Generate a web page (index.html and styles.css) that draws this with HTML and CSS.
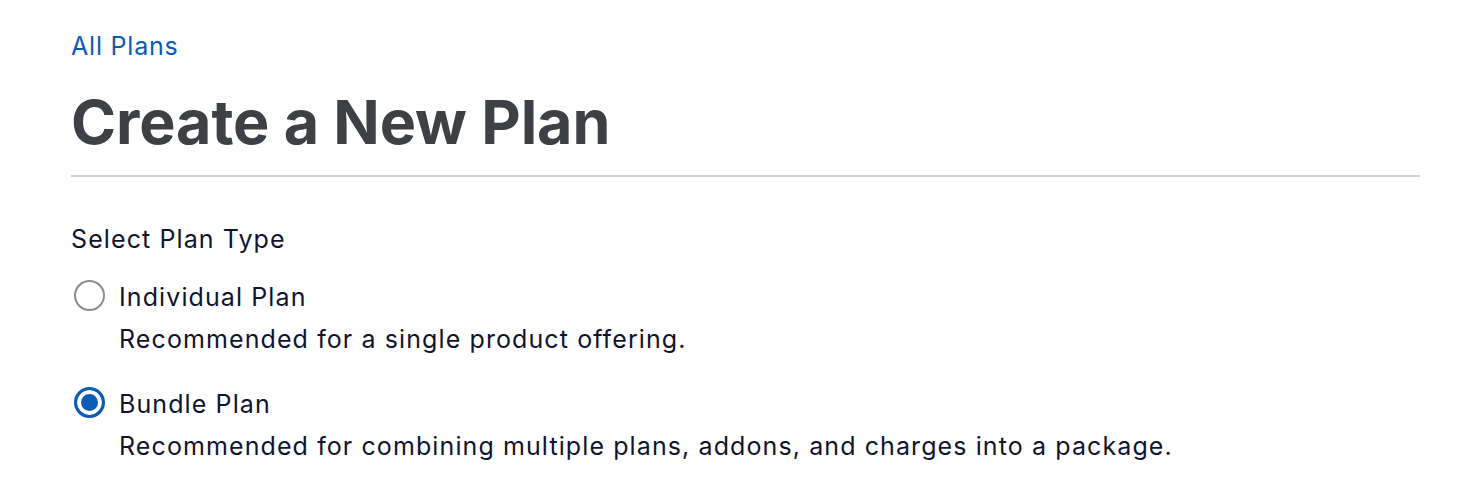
FILE: index.html
```html
<!DOCTYPE html>
<html lang="en">
<head>
  <meta charset="UTF-8" />
  <meta name="viewport" content="width=device-width, initial-scale=1.0" />
  <title>Create a New Plan</title>
  <link rel="stylesheet" href="styles.css">
</head>
<body>
  <div class="page">
    <a href="#" class="back-link">All Plans</a>
    <h1 class="title">Create a New Plan</h1>
    <hr class="divider" />

    <fieldset class="plan-type">
      <legend>Select Plan Type</legend>

      <label class="option">
        <input type="radio" name="planType" value="individual" />
        <span class="radio"></span>
        <span class="option-text">
          <span class="option-name">Individual Plan</span>
          <span class="option-desc">Recommended for a single product offering.</span>
        </span>
      </label>

      <label class="option">
        <input type="radio" name="planType" value="bundle" checked />
        <span class="radio"></span>
        <span class="option-text">
          <span class="option-name">Bundle Plan</span>
          <span class="option-desc">Recommended for combining multiple plans, addons, and charges into a package.</span>
        </span>
      </label>
    </fieldset>
  </div>
</body>
</html>
```

FILE: styles.css
```css
body {
  margin: 0;
  font-family: Inter, 'Noto Sans', sans-serif;
  color: #0f1430;
  background: #fff;
}

.page {
  padding: 29px 60px 0 71px;
}

.back-link {
  display: inline-block;
  color: #0b5cb5;
  font-size: 25px;
  line-height: 34px;
  letter-spacing: 0.8px;
  text-decoration: none;
}

.title {
  margin: 23px 0 0;
  font-size: 61px;
  line-height: 72px;
  font-weight: 700;
  color: #3d4045;
  letter-spacing: -0.1px;
}

.divider {
  margin: 17px 0 0;
  border: none;
  height: 2px;
  background: #d3d3d3;
}

.plan-type {
  border: none;
  margin: 45px 0 0;
  padding: 0;
}

.plan-type legend {
  padding: 0;
  font-size: 25px;
  line-height: 34px;
  letter-spacing: 1.1px;
}

.option {
  display: flex;
  align-items: flex-start;
  gap: 14px;
  margin-top: 24px;
  font-size: 25px;
  line-height: 34px;
  letter-spacing: 1.1px;
  cursor: pointer;
}

.option + .option {
  margin-top: 31px;
}

.option input {
  display: none;
}

.radio {
  flex: none;
  width: 27px;
  height: 27px;
  margin: 0 0 0 3px;
  border: 2px solid #8a8a8a;
  border-radius: 50%;
  box-sizing: content-box;
}

.option input:checked + .radio {
  width: 25px;
  height: 25px;
  border: 3px solid #0b5cb5;
  background: #0b5cb5;
  box-shadow: inset 0 0 0 4px #fff;
}

.option-text {
  display: flex;
  flex-direction: column;
}

.option-desc {
  margin-top: 8px;
}
```
